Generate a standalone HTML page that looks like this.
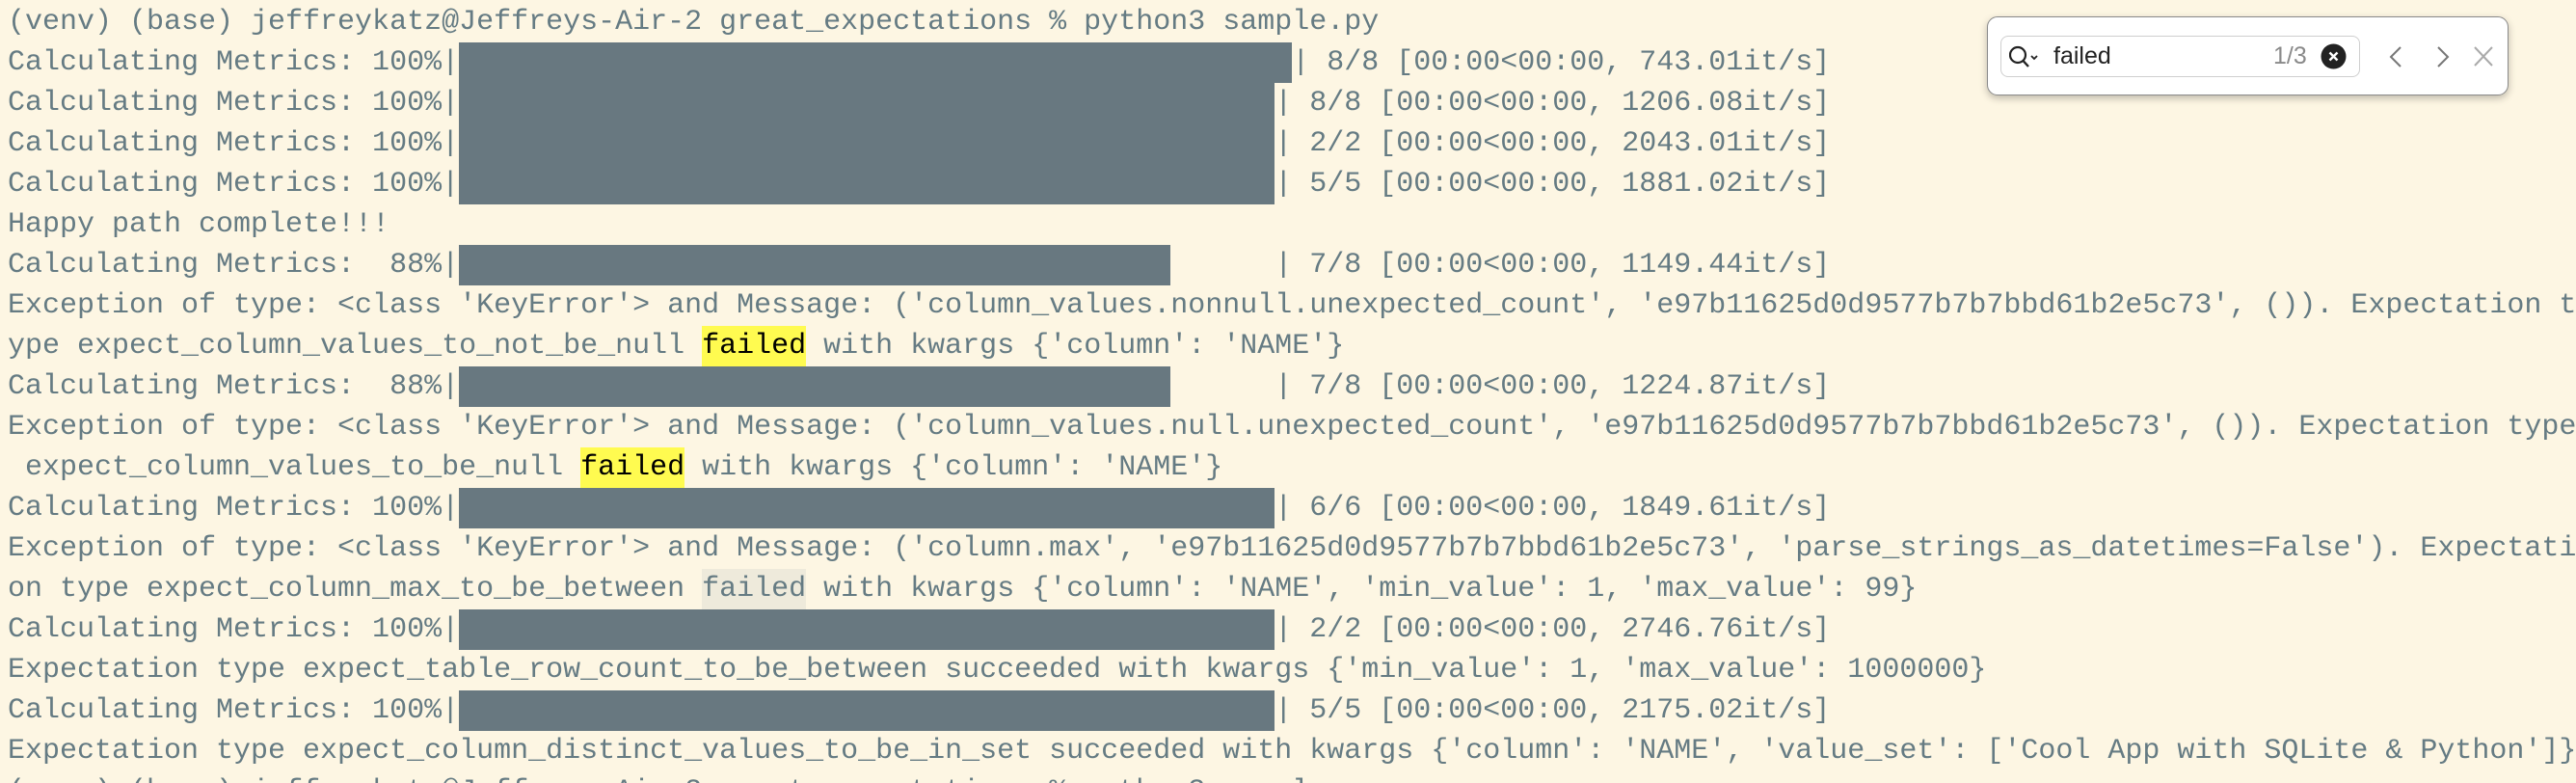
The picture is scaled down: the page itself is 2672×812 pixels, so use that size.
<!DOCTYPE html>
<html><head><meta charset="utf-8"><style>
html,body{margin:0;padding:0;width:2672px;height:812px;overflow:hidden;background:#fdf6e3;position:relative}
pre{position:absolute;left:8px;top:2px;margin:0;font-family:"Liberation Mono",monospace;font-size:30px;line-height:42px;color:#657b83;white-space:pre;z-index:2}
.bar{position:absolute;background:#687880;height:42px;z-index:1}
.hl{display:inline-block;height:42px;line-height:42px;vertical-align:top;background:#fffb50;color:#000}
.hg{display:inline-block;height:42px;line-height:42px;vertical-align:top;background:#eeeadb}
.panel{position:absolute;left:2061px;top:17px;width:539px;height:80px;background:#fff;border:1px solid #8a8a8a;border-radius:11px;box-shadow:0 3px 8px rgba(0,0,0,.25);z-index:5;font-family:"Liberation Sans",sans-serif}
.field{position:absolute;left:13px;top:19px;width:371px;height:41px;border:1px solid #cfcfcf;border-radius:8px}
</style></head><body>
<div class="bar" style="left:476px;top:44px;width:864px"></div>
<div class="bar" style="left:476px;top:86px;width:846px;height:126px"></div>
<div class="bar" style="left:476px;top:254px;width:738px"></div>
<div class="bar" style="left:476px;top:380px;width:738px"></div>
<div class="bar" style="left:476px;top:506px;width:846px"></div>
<div class="bar" style="left:476px;top:632px;width:846px"></div>
<div class="bar" style="left:476px;top:716px;width:846px"></div>
<pre>(venv) (base) jeffreykatz@Jeffreys-Air-2 great_expectations % python3 sample.py
Calculating Metrics: 100%|                                                | 8/8 [00:00&lt;00:00, 743.01it/s]
Calculating Metrics: 100%|                                               | 8/8 [00:00&lt;00:00, 1206.08it/s]
Calculating Metrics: 100%|                                               | 2/2 [00:00&lt;00:00, 2043.01it/s]
Calculating Metrics: 100%|                                               | 5/5 [00:00&lt;00:00, 1881.02it/s]
Happy path complete!!!
Calculating Metrics:  88%|                                               | 7/8 [00:00&lt;00:00, 1149.44it/s]
Exception of type: &lt;class 'KeyError'&gt; and Message: ('column_values.nonnull.unexpected_count', 'e97b11625d0d9577b7b7bbd61b2e5c73', ()). Expectation t
ype expect_column_values_to_not_be_null <span class="hl">failed</span> with kwargs {'column': 'NAME'}
Calculating Metrics:  88%|                                               | 7/8 [00:00&lt;00:00, 1224.87it/s]
Exception of type: &lt;class 'KeyError'&gt; and Message: ('column_values.null.unexpected_count', 'e97b11625d0d9577b7b7bbd61b2e5c73', ()). Expectation type
 expect_column_values_to_be_null <span class="hl">failed</span> with kwargs {'column': 'NAME'}
Calculating Metrics: 100%|                                               | 6/6 [00:00&lt;00:00, 1849.61it/s]
Exception of type: &lt;class 'KeyError'&gt; and Message: ('column.max', 'e97b11625d0d9577b7b7bbd61b2e5c73', 'parse_strings_as_datetimes=False'). Expectati
on type expect_column_max_to_be_between <span class="hg">failed</span> with kwargs {'column': 'NAME', 'min_value': 1, 'max_value': 99}
Calculating Metrics: 100%|                                               | 2/2 [00:00&lt;00:00, 2746.76it/s]
Expectation type expect_table_row_count_to_be_between succeeded with kwargs {'min_value': 1, 'max_value': 1000000}
Calculating Metrics: 100%|                                               | 5/5 [00:00&lt;00:00, 2175.02it/s]
Expectation type expect_column_distinct_values_to_be_in_set succeeded with kwargs {'column': 'NAME', 'value_set': ['Cool App with SQLite &amp; Python']}
(venv) (base) jeffreykatz@Jeffreys-Air-2 great_expectations % python3 sample.py</pre>
<div class="panel">
 <div class="field">
  <svg style="position:absolute;left:8px;top:8px" width="40" height="26" viewBox="0 0 40 26"><circle cx="9" cy="11" r="8" fill="none" stroke="#222" stroke-width="2.2"/><line x1="14.5" y1="17" x2="20" y2="23" stroke="#222" stroke-width="2.4"/><polyline points="23,12 26,15 29,12" fill="none" stroke="#222" stroke-width="1.8"/></svg>
  <span style="position:absolute;left:54px;top:6px;font-size:25px;color:#222">failed</span>
  <span style="position:absolute;left:282px;top:6px;font-size:25px;color:#8a8a8a">1/3</span>
  <svg style="position:absolute;left:331px;top:7px" width="27" height="27" viewBox="0 0 27 27"><circle cx="13.5" cy="13.5" r="13" fill="#222"/><path d="M9.5 9.5 L17.5 17.5 M17.5 9.5 L9.5 17.5" stroke="#fff" stroke-width="2.4"/></svg>
 </div>
 <svg style="position:absolute;left:412px;top:26px" width="130" height="30" viewBox="0 0 130 30"><polyline points="16,5 6,15 16,25" fill="none" stroke="#777" stroke-width="2"/><polyline points="55,5 65,15 55,25" fill="none" stroke="#777" stroke-width="2"/><path d="M93 5 L111 24 M111 5 L93 24" stroke="#aaa" stroke-width="2"/></svg>
</div>
</body></html>
